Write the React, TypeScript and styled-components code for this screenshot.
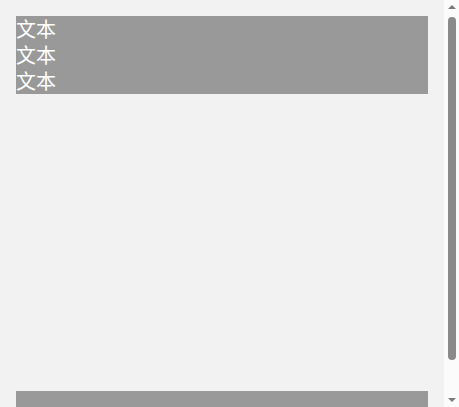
import styled, { createGlobalStyle } from "styled-components";

const GlobalStyle = createGlobalStyle`
  html, body {
    margin: 0;
    padding: 0;
    height: 407px;
    overflow: hidden;
    background: #f2f2f2;
  }
  body {
    font-family: "Noto Sans CJK SC", "Noto Sans", sans-serif;
  }
`;

const Frame = styled.div`
  display: flex;
  height: 407px;
`;

const Page = styled.div`
  flex: 1;
  display: flex;
  flex-direction: column;
  padding: 16px;
  background: #f2f2f2;
  overflow: hidden;
`;

const TextBlock = styled.div`
  flex-shrink: 0;
  background: #999999;
  color: #ffffff;
  font-size: 20px;
  line-height: 26px;
`;

const Line = styled.div`
  height: 26px;
`;

const Spacer = styled.div<{ size: number }>`
  flex-shrink: 0;
  height: ${({ size }) => size}px;
`;

const Footer = styled.div`
  flex-shrink: 0;
  background: #999999;
  height: 40px;
`;

const Scrollbar = styled.div`
  width: 15px;
  flex-shrink: 0;
  background: #fbfbfb;
  display: flex;
  flex-direction: column;
  align-items: center;
`;

const Arrow = styled.div<{ down?: boolean }>`
  height: 15px;
  width: 15px;
  display: flex;
  align-items: center;
  justify-content: center;
  &::before {
    content: "";
    width: 0;
    height: 0;
    border-left: 4px solid transparent;
    border-right: 4px solid transparent;
    ${({ down }) =>
      down
        ? "border-top: 4px solid #7a7a7a; margin-top: 1px;"
        : "border-bottom: 4px solid #7a7a7a; margin-bottom: 1px;"}
  }
`;

const Track = styled.div`
  flex: 1;
  width: 15px;
  display: flex;
  flex-direction: column;
  align-items: center;
  padding-top: 2px;
`;

const Thumb = styled.div`
  width: 8px;
  height: 343px;
  margin-left: 1px;
  border-radius: 4px;
  background: #8a8a8a;
`;

export default function App(): JSX.Element {
  return (
    <>
      <GlobalStyle />
      <Frame>
        <Page>
          <TextBlock>
            <Line>文本</Line>
            <Line>文本</Line>
            <Line>文本</Line>
          </TextBlock>
          <Spacer size={297} />
          <Footer />
        </Page>
        <Scrollbar>
          <Arrow />
          <Track>
            <Thumb />
          </Track>
          <Arrow down />
        </Scrollbar>
      </Frame>
    </>
  );
}
